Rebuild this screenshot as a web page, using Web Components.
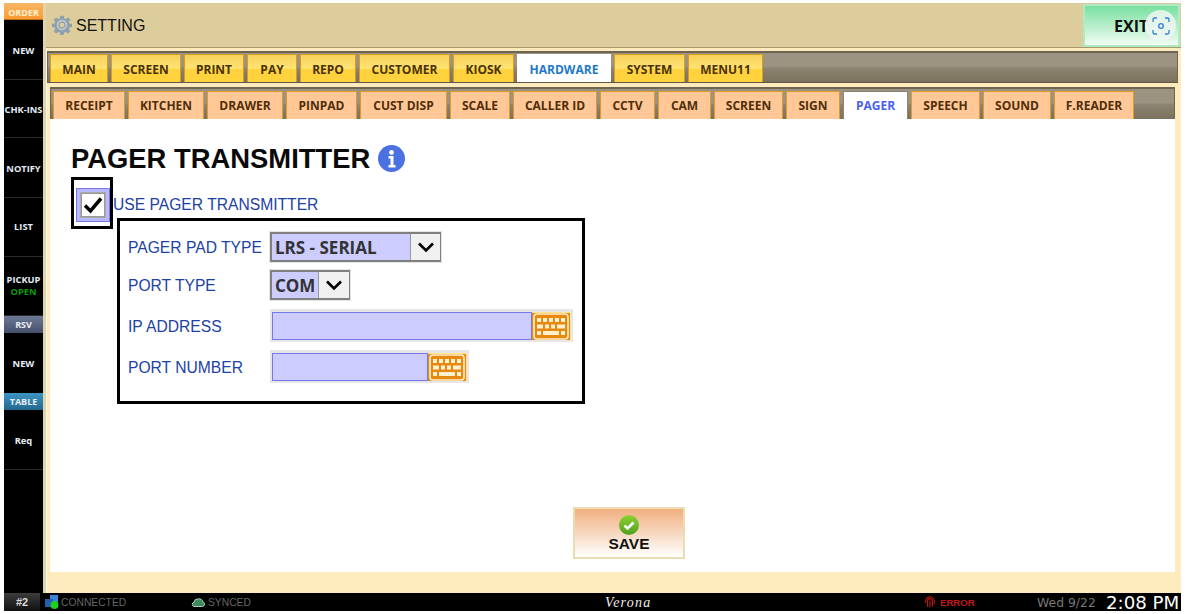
<!DOCTYPE html>
<html>
<head>
<meta charset="utf-8">
<style>
  html, body { margin: 0; height: 100%; background: #fff; overflow: hidden; }
  body { font-family: "Liberation Sans", Arial, sans-serif; }
</style>
</head>
<body>
<pos-app>
  <pos-sidebar slot="side">
    <side-label color="order">ORDER</side-label>
    <side-item h="60">NEW</side-item>
    <side-item h="58">CHK-INS</side-item>
    <side-item h="60">NOTIFY</side-item>
    <side-item h="59" up>LIST</side-item>
    <side-item h="59" up>PICKUP<span style="color:#0c9a0c;display:block;margin-top:-1px">OPEN</span></side-item>
    <side-label color="rsv">RSV</side-label>
    <side-item h="60" plain>NEW</side-item>
    <side-label color="table">TABLE</side-label>
    <side-item h="60">Req</side-item>
  </pos-sidebar>

  <top-bar slot="top"></top-bar>

  <tab-strip slot="tabs" level="main">
    <tab-btn w="58">MAIN</tab-btn>
    <tab-btn w="70">SCREEN</tab-btn>
    <tab-btn w="60">PRINT</tab-btn>
    <tab-btn w="50">PAY</tab-btn>
    <tab-btn w="56">REPO</tab-btn>
    <tab-btn w="91">CUSTOMER</tab-btn>
    <tab-btn w="61">KIOSK</tab-btn>
    <tab-btn w="94" active>HARDWARE</tab-btn>
    <tab-btn w="71">SYSTEM</tab-btn>
    <tab-btn w="75">MENU11</tab-btn>
  </tab-strip>

  <tab-strip slot="subtabs" level="sub">
    <tab-btn w="72" sub>RECEIPT</tab-btn>
    <tab-btn w="76" sub>KITCHEN</tab-btn>
    <tab-btn w="76" sub>DRAWER</tab-btn>
    <tab-btn w="71" sub>PINPAD</tab-btn>
    <tab-btn w="87" sub>CUST DISP</tab-btn>
    <tab-btn w="60" sub>SCALE</tab-btn>
    <tab-btn w="84" sub>CALLER ID</tab-btn>
    <tab-btn w="55" sub>CCTV</tab-btn>
    <tab-btn w="53" sub>CAM</tab-btn>
    <tab-btn w="69" sub>SCREEN</tab-btn>
    <tab-btn w="54" sub>SIGN</tab-btn>
    <tab-btn w="65" sub active>PAGER</tab-btn>
    <tab-btn w="69" sub>SPEECH</tab-btn>
    <tab-btn w="68" sub>SOUND</tab-btn>
    <tab-btn w="80" sub>F.READER</tab-btn>
  </tab-strip>

  <pager-form slot="content"></pager-form>
  <status-bar slot="status"></status-bar>
</pos-app>

<script>
const KEYBOARD = `<svg width="36" height="27" viewBox="0 0 36 27">
  <rect x="1" y="1" width="34" height="25" rx="3" fill="none" stroke="#fff0d0" stroke-width="1.600"/>
  <g fill="#fff0d0">
    <rect x="4" y="5" width="4" height="4"/><rect x="10" y="5" width="4" height="4"/><rect x="16" y="5" width="4" height="4"/><rect x="22" y="5" width="4" height="4"/><rect x="28" y="5" width="4" height="4"/>
    <rect x="4" y="11.500" width="6" height="4"/><rect x="12" y="11.500" width="4" height="4"/><rect x="18" y="11.500" width="4" height="4"/><rect x="24" y="11.500" width="8" height="4"/>
    <rect x="4" y="18" width="4" height="4"/><rect x="10" y="18" width="16" height="4"/><rect x="28" y="18" width="4" height="4"/>
  </g>
</svg>`;

class PosApp extends HTMLElement {
  connectedCallback() {
    this.attachShadow({ mode: 'open' });
    this.shadowRoot.innerHTML = `
      <style>
        :host { display: flex; flex-direction: column; height: 608px; width: 1177px; padding: 3px 0 0 4px; }
        .row { display: flex; height: 590px; }
        .main { flex: 1; display: flex; flex-direction: column; background: #fdebbd;
                border-left: 3px solid #e0d4ae; box-shadow: inset 1px 0 0 #fff8e4; min-width: 0; }
        .frame { flex: 1; display: flex; flex-direction: column; padding: 4px 3px 0 1px; }
        .inner { display: flex; flex-direction: column; padding: 4px 3px 21px; flex: 1; }
      </style>
      <div class="row">
        <slot name="side"></slot>
        <div class="main">
          <slot name="top"></slot>
          <div class="frame">
            <slot name="tabs"></slot>
            <div class="inner">
              <slot name="subtabs"></slot>
              <slot name="content"></slot>
            </div>
          </div>
        </div>
      </div>
      <slot name="status"></slot>
    `;
  }
}

class PosSidebar extends HTMLElement {
  connectedCallback() {
    this.attachShadow({ mode: 'open' });
    this.shadowRoot.innerHTML = `
      <style>
        :host { display: flex; flex-direction: column; width: 39px; background: #000; flex: none; }
      </style>
      <slot></slot>
    `;
  }
}

class SideItem extends HTMLElement {
  connectedCallback() {
    this.attachShadow({ mode: 'open' });
    const h = this.getAttribute('h');
    this.shadowRoot.innerHTML = `
      <style>
        :host { display: flex; align-items: center; justify-content: center; text-align: center; height: ${h}px;
                box-sizing: border-box; border-bottom: 1px solid #2a2a2a; flex: none;
                font: bold 9.300px "Open Sans", "Liberation Sans", sans-serif; color: #e4edf6; }
        :host([plain]) { border-bottom: 0; }
        div { margin-top: 1px; }
        :host([up]) div { margin-top: -2px; }
      </style>
      <div><slot></slot></div>
    `;
  }
}

class SideLabel extends HTMLElement {
  connectedCallback() {
    this.attachShadow({ mode: 'open' });
    this.shadowRoot.innerHTML = `
      <style>
        :host { display: flex; align-items: center; justify-content: center; height: 17px; flex: none;
                font: bold 9px "Open Sans", "Liberation Sans", sans-serif; color: #e8ecf4; }
        :host([color="order"]) { background: linear-gradient(#f6b668, #ff9a30); color: #fff0d0; border-bottom: 1px solid #c07018; box-sizing: border-box; padding-top: 2px; }
        :host([color="rsv"]) { background: linear-gradient(#6d7895, #46506c); }
        :host([color="table"]) { background: linear-gradient(#3d94c4, #22688f); }
      </style>
      <slot></slot>
    `;
  }
}

class TopBar extends HTMLElement {
  connectedCallback() {
    this.attachShadow({ mode: 'open' });
    this.shadowRoot.innerHTML = `
      <style>
        :host { display: flex; align-items: center; height: 44px; background: #ddcd9c; flex: none; position: relative;
                border-bottom: 1px solid #a8996e; box-sizing: content-box; margin-bottom: -1px; }
        .gear { margin-left: 6px; width: 20px; height: 20px; }
        .title { margin: 1px 0 0 4px; font: 16px "Liberation Sans", sans-serif; color: #111; }
        .exit { margin-left: auto; margin-right: 1px; margin-top: 1px; width: 97px; height: 43px; display: flex; align-items: center; justify-content: flex-start;
                padding-left: 29px; box-sizing: border-box; border: 2px solid #aeeac4;
                background: linear-gradient(#78e0a0, #f2fcf4); font: bold 16px "Open Sans", "Liberation Sans", sans-serif; color: #111; }
        .scan { position: absolute; right: 5px; top: 7px; width: 31px; height: 31px; border-radius: 50%;
                background: rgba(236,246,240,.88); display: flex; align-items: center; justify-content: center; }
      </style>
      <svg class="gear" viewBox="0 0 24 24">
        <path fill="#8fa0ac" d="M10 1h4l.6 3.2 2 .8L19.3 3l2.8 2.8-2 2.7.8 2L24 11v4l-3.1.5-.8 2 1.9 2.7-2.8 2.8-2.7-1.9-2 .8L14 25h-4l-.5-3.1-2-.8-2.7 1.9L2 20.200l1.900-2.700-.8-2L0 15v-4l3.100-.5.8-2L2 5.800 4.800 3l2.700 2 2-.8z" transform="scale(1 .96)"/>
        <circle cx="12" cy="12" r="6.500" fill="#b6c4cc"/>
        <circle cx="12" cy="12" r="3.500" fill="#ddcd9c" stroke="#7f909c"/>
      </svg>
      <span class="title">SETTING</span>
      <div class="exit">EXIT</div>
      <div class="scan">
        <svg width="18" height="18" viewBox="0 0 18 18" fill="none" stroke="#2f7fd8" stroke-width="1.300">
          <path d="M1 5V2.500A1.500 1.500 0 0 1 2.500 1H5M13 1h2.500A1.500 1.500 0 0 1 17 2.500V5M17 13v2.500a1.500 1.500 0 0 1-1.500 1.500H13M5 17H2.500A1.500 1.500 0 0 1 1 15.500V13"/>
          <circle cx="9" cy="9" r="2.300"/>
        </svg>
      </div>
    `;
  }
}

class TabStrip extends HTMLElement {
  connectedCallback() {
    this.attachShadow({ mode: 'open' });
    this.shadowRoot.innerHTML = `
      <style>
        :host { display: flex; flex: none; height: 32px; box-sizing: border-box; align-items: flex-end;
                border-top: 2px solid #6d6552; border-left: 1px solid #6d6552; border-right: 1px solid #6d6552;
                background: linear-gradient(#9c9380 0, #9c9380 45%, #8d8471 52%, #7b725d 100%); }
        :host([level="main"]) { padding-left: 2px; border-bottom: 1px solid #5f5846; }
        :host([level="sub"]) { padding-left: 2px; }
      </style>
      <slot></slot>
    `;
  }
}

class TabBtn extends HTMLElement {
  connectedCallback() {
    this.attachShadow({ mode: 'open' });
    const w = this.getAttribute('w');
    this.shadowRoot.innerHTML = `
      <style>
        :host { display: flex; align-items: center; justify-content: center; flex: none; box-sizing: border-box;
                width: ${w}px; height: 28px; margin-right: 3px; padding-top: 1px;
                border: 1px solid #d89c20; border-bottom: 0;
                background: linear-gradient(#f6d15a, #ffe272 48%, #ffd23e 55%, #ffd23e);
                font: bold 12px "Open Sans", "Liberation Sans", sans-serif; color: #4a3208; white-space: nowrap; }
        :host([sub]) { background: #ffc896; color: #4f2e0c; border-color: #e09a2c; padding-top: 0; padding-bottom: 1px; }
        :host([active]) { background: #fff; border-color: #fff; color: #1f78c8; }
        :host([sub][active]) { color: #4a60f0; border-color: #8a8272; border-bottom: 0; }
      </style>
      <slot></slot>
    `;
  }
}

class PagerForm extends HTMLElement {
  connectedCallback() {
    this.attachShadow({ mode: 'open' });
    this.shadowRoot.innerHTML = `
      <style>
        :host { display: flex; flex-direction: column; flex: 1; background: #fff; padding: 22px 0 13px 21px; min-height: 0; }
        h1 { margin: 0 0 1px; display: flex; align-items: center; height: 35px; font: bold 27.400px "Liberation Sans", sans-serif; color: #0a0a0a; white-space: pre; }
        .info { margin-left: 8px; }
        .use { display: flex; align-items: flex-start; margin-bottom: -11px; }
        .use span { margin-top: 19px; font: 15.650px "Liberation Sans", sans-serif; color: #1c42a4; }
        .panel { margin-left: 46px; width: 468px; height: 186px; box-sizing: border-box; border: 3px solid #000; background: #fff;
                 padding: 11px 0 0 8px; display: flex; flex-direction: column; position: relative; }
        .save { margin: auto 0 0 502px; width: 112px; height: 52px; box-sizing: border-box; border: 2px solid #ecdcb4;
                background: linear-gradient(#f0b080, #fff); display: flex; flex-direction: column; align-items: center; justify-content: center;
                font: bold 15.500px "Liberation Sans", sans-serif; color: #111; padding-top: 1px; }
      </style>
      <h1>PAGER TRANSMITTER<svg class="info" width="27" height="27" viewBox="0 0 27 27">
          <circle cx="13.500" cy="13.500" r="13.500" fill="#4a70e2"/>
          <circle cx="13.500" cy="7.500" r="2.400" fill="#fff"/>
          <path fill="#fff" d="M10.500 11h5v9h2v2.500h-7V20h2v-6.500h-2z"/>
        </svg></h1>
      <div class="use">
        <check-box></check-box>
        <span>USE PAGER TRANSMITTER</span>
      </div>
      <div class="panel">
        <form-row h="30" gap="8" label="PAGER PAD TYPE"><pad-select w="171" arrow="30">LRS - SERIAL</pad-select></form-row>
        <form-row h="30" gap="9" label="PORT TYPE"><pad-select w="80" arrow="31">COM</pad-select></form-row>
        <form-row h="33" gap="8" label="IP ADDRESS"><pad-input w="303"></pad-input></form-row>
        <form-row h="33" gap="0" label="PORT NUMBER"><pad-input w="199"></pad-input></form-row>
      </div>
      <div class="save">
        <svg width="20" height="20" viewBox="0 0 20 20">
          <defs><linearGradient id="g" x1="0" y1="0" x2="0" y2="1"><stop offset="0" stop-color="#8ed030"/><stop offset="1" stop-color="#4fa020"/></linearGradient></defs>
          <circle cx="10" cy="10" r="10" fill="url(#g)"/>
          <path d="M5.500 10.500l3 3 6-6" fill="none" stroke="#fff" stroke-width="2.600"/>
        </svg>
        <span>SAVE</span>
      </div>
    `;
  }
}

class CheckBox extends HTMLElement {
  connectedCallback() {
    this.attachShadow({ mode: 'open' });
    this.shadowRoot.innerHTML = `
      <style>
        :host { display: flex; flex: none; width: 42px; height: 52px; box-sizing: border-box; border: 3px solid #000; background: #fff; padding: 8px 0 0 2px; }
        .tint { width: 34px; height: 34px; box-sizing: border-box; border: 1px solid #7777ee; background: #b8b8ff; padding: 4px; }
        .box { width: 24px; height: 24px; box-sizing: border-box; border: 1px solid #999; background: #fff; display: flex; align-items: center; justify-content: center; box-shadow: 0 0 0 1px #aaa; }
      </style>
      <div class="tint"><div class="box">
        <svg width="20" height="18" viewBox="0 0 20 18"><path d="M2 9.500l5.500 5.500L18 2.500" fill="none" stroke="#000" stroke-width="3.500"/></svg>
      </div></div>
    `;
  }
}

class FormRow extends HTMLElement {
  connectedCallback() {
    this.attachShadow({ mode: 'open' });
    const h = this.getAttribute('h');
    const gap = this.getAttribute('gap');
    this.shadowRoot.innerHTML = `
      <style>
        :host { display: flex; align-items: center; height: ${h}px; margin-bottom: ${gap}px; flex: none; }
        label { width: 142px; padding-top: 2px; font: 15.650px "Liberation Sans", sans-serif; color: #1c42a4; white-space: nowrap; flex: none; }
      </style>
      <label>${this.getAttribute('label')}</label>
      <slot></slot>
    `;
  }
}

class PadSelect extends HTMLElement {
  connectedCallback() {
    this.attachShadow({ mode: 'open' });
    const w = this.getAttribute('w');
    const a = this.getAttribute('arrow');
    this.shadowRoot.innerHTML = `
      <style>
        :host { display: flex; width: ${w}px; height: 30px; box-sizing: border-box; border: 2px solid #808080; border-right-width: 1px; box-shadow: 0 0 0 1px #e4e4e4; background: #ccccff; flex: none; }
        .val { flex: 1; padding-left: 3px; display: flex; align-items: center; font: bold 17px "Open Sans", "Liberation Sans", sans-serif; color: #333; white-space: nowrap; overflow: hidden; }
        .arrow { width: ${a}px; background: #f0f0f0; border-left: 1px solid #999; box-sizing: border-box; display: flex; align-items: center; justify-content: center; flex: none; }
      </style>
      <div class="val"><slot></slot></div>
      <div class="arrow">
        <svg width="18" height="11" viewBox="0 0 18 11"><path d="M2 1.500l7 7 7-7" fill="none" stroke="#000" stroke-width="2.600"/></svg>
      </div>
    `;
  }
}

class PadInput extends HTMLElement {
  connectedCallback() {
    this.attachShadow({ mode: 'open' });
    const w = this.getAttribute('w');
    this.shadowRoot.innerHTML = `
      <style>
        :host { display: flex; width: ${w}px; height: 100%; box-sizing: border-box; padding: 3px 2px 2px 2px; background: #e6e6e6; flex: none; }
        .field { flex: 1; box-sizing: border-box; border: 1px solid #7777ee; background: #ccccff; height: 28px; }
        .kb { width: 39px; height: 28px; background: #e8890f; display: flex; align-items: center; justify-content: center; border-right: 1px solid #ffe48a; border-top: 1px solid #ffe48a; box-sizing: border-box; flex: none; }
      </style>
      <div class="field"></div>
      <div class="kb">${KEYBOARD}</div>
    `;
  }
}

class StatusBar extends HTMLElement {
  connectedCallback() {
    this.attachShadow({ mode: 'open' });
    this.shadowRoot.innerHTML = `
      <style>
        :host { display: flex; align-items: center; height: 18px; width: 1177px; background: #000; flex: none; font: 10.300px "Liberation Sans", sans-serif; color: #666; white-space: nowrap; }
        .num { width: 36px; height: 18px; display: flex; align-items: center; justify-content: center; background: linear-gradient(#3c3c3c, #111); color: #ddd; font-weight: bold; font-size: 11px; flex: none; }
        .ic { flex: none; display: block; }
        .conn { margin-left: 2px; width: 130px; }
        .sync { margin-left: 3px; width: 44px; }
        .ver { margin: 2px 0 0 353px; width: 320px; font: italic 14px "Liberation Serif", serif; color: #eee; letter-spacing: 1.200px; }
        .err { margin-left: 5px; color: #c01818; font-weight: bold; font-size: 9.600px; width: 97px; }
        .date { font: 12.400px "DejaVu Sans", sans-serif; color: #777; width: 69px; }
        .time { font: 18.200px "DejaVu Sans", sans-serif; color: #fff; }
      </style>
      <div class="num">#2</div>
      <svg class="ic" style="margin-left:5px" width="14" height="14" viewBox="0 0 14 14">
        <rect x="5" y="0" width="8" height="7" fill="#3a86d8"/><rect x="0" y="4" width="8" height="8" fill="#2060b0"/>
        <circle cx="9.500" cy="10" r="4" fill="#1cd01c"/>
      </svg>
      <span class="conn">CONNECTED</span>
      <svg class="ic" width="14" height="10" viewBox="0 0 14 10">
        <path d="M3 9.500h8.500a2.300 2.300 0 0 0 .4-4.500A3.600 3.600 0 0 0 7 2 3.700 3.700 0 0 0 3 5.200 2.200 2.200 0 0 0 3 9.500z" fill="#3d8a5c" stroke="#cfe8d8" stroke-width=".8"/>
      </svg>
      <span class="sync">SYNCED</span>
      <span class="ver">Verona</span>
      <svg class="ic" width="10" height="12" viewBox="0 0 10 12" fill="none" stroke="#c01818" stroke-width="1.100">
        <path d="M.8 7V5a4.200 4.200 0 0 1 8.400 0v3M2.600 11V5a2.400 2.400 0 0 1 4.800 0v5.500M5 4.500V11.500"/>
      </svg>
      <span class="err">ERROR</span>
      <span class="date">Wed 9/22</span>
      <span class="time">2:08 PM</span>
    `;
  }
}

customElements.define('pos-app', PosApp);
customElements.define('pos-sidebar', PosSidebar);
customElements.define('side-item', SideItem);
customElements.define('side-label', SideLabel);
customElements.define('top-bar', TopBar);
customElements.define('tab-strip', TabStrip);
customElements.define('tab-btn', TabBtn);
customElements.define('pager-form', PagerForm);
customElements.define('check-box', CheckBox);
customElements.define('form-row', FormRow);
customElements.define('pad-select', PadSelect);
customElements.define('pad-input', PadInput);
customElements.define('status-bar', StatusBar);
</script>
</body>
</html>
